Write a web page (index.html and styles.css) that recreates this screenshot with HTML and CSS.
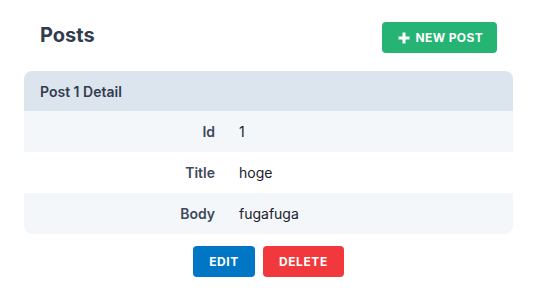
FILE: index.html
```html
<!DOCTYPE html>
<html lang="en">

<head>
    <meta charset="UTF-8">
    <meta name="viewport" content="width=device-width, initial-scale=1.0">
    <title>Posts</title>
    <link rel="stylesheet" href="styles.css">
</head>

<body>
    <div class="container">
        <div class="page-head">
            <h1>Posts</h1>
            <button class="btn btn-new">
                <svg class="plus" viewBox="0 0 12 12" width="12" height="12">
                    <path d="M6 0.5v11M0.5 6h11" stroke="currentColor" stroke-width="3" />
                </svg>
                New Post
            </button>
        </div>
        <div class="detail-card">
            <div class="detail-head">Post 1 Detail</div>
            <div class="detail-row">
                <div class="label">Id</div>
                <div class="value">1</div>
            </div>
            <div class="detail-row">
                <div class="label">Title</div>
                <div class="value">hoge</div>
            </div>
            <div class="detail-row">
                <div class="label">Body</div>
                <div class="value">fugafuga</div>
            </div>
        </div>
        <div class="actions">
            <button class="btn btn-edit">Edit</button>
            <button class="btn btn-delete">Delete</button>
        </div>
    </div>
</body>

</html>
```

FILE: styles.css
```css
body {
    font-family: Inter, "Noto Sans", sans-serif;
    margin: 0;
    padding: 0;
    background-color: white;
    color: #1a202c;
}

.container {
    padding: 22px 24px 0 24px;
}

.page-head {
    display: flex;
    align-items: center;
    justify-content: space-between;
    padding: 0 16px;
    margin-bottom: 18px;
}

h1 {
    margin: 0;
    font-size: 20px;
    font-weight: 700;
    color: #323c4f;
    line-height: 24px;
    padding-bottom: 6px;
}

.btn {
    border: none;
    color: white;
    font-family: Inter, "Noto Sans", sans-serif;
    font-size: 12px;
    font-weight: 700;
    letter-spacing: 0.05em;
    text-transform: uppercase;
    height: 31px;
    padding: 0 16px;
    border-radius: 4px;
    cursor: pointer;
    display: inline-flex;
    align-items: center;
}

.btn-new {
    background-color: #25b473;
    letter-spacing: 0.03em;
    padding: 0 14px 0 16px;
}

.plus {
    margin-right: 6px;
}

.detail-card {
    border-radius: 8px;
    overflow: hidden;
}

.detail-head {
    background-color: #dce4ed;
    height: 40px;
    display: flex;
    align-items: center;
    padding: 0 16px;
    font-size: 14px;
    font-weight: 600;
    color: #323c4f;
}

.detail-row {
    display: grid;
    grid-template-columns: 203px 1fr;
    height: 41px;
    align-items: center;
    font-size: 14px;
}

.detail-row:nth-child(even) {
    background-color: #f4f7fa;
}

.label {
    text-align: right;
    padding-right: 12px;
    font-weight: 600;
    color: #3f4859;
}

.value {
    padding-left: 12px;
    color: #1a202c;
}

.actions {
    display: flex;
    justify-content: center;
    gap: 8px;
    margin-top: 12px;
}

.btn-edit {
    background-color: #0176c5;
}

.btn-delete {
    background-color: #f0383d;
}
```
